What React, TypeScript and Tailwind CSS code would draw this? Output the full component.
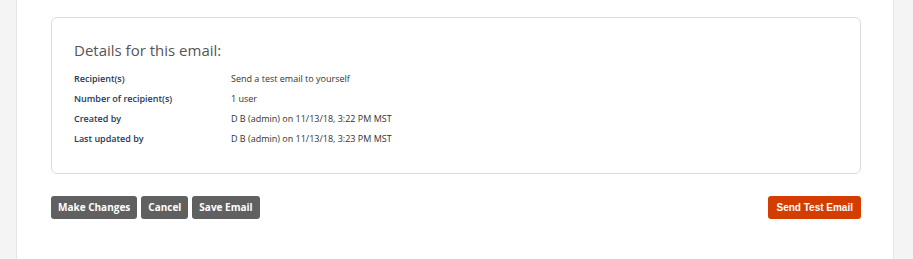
export default function App() {
  const rows = [
    { label: 'Recipient(s)', value: 'Send a test email to yourself' },
    { label: 'Number of recipient(s)', value: '1 user' },
    { label: 'Created by', value: 'D B (admin) on 11/13/18, 3:22 PM MST' },
    { label: 'Last updated by', value: 'D B (admin) on 11/13/18, 3:23 PM MST' },
  ];

  return (
    <div className="flex h-[259px] w-[913px] bg-[#f4f4f4] font-['Open_Sans',sans-serif]">
      <div className="ml-[16px] mr-[19px] flex-1 border-x border-[#e4e4e4] bg-white pl-[34px] pr-[32px] pt-[17px]">
        <div className="h-[157px] rounded-[6px] border border-[#dcdcdc] px-[22px] pt-[22px]">
          <h2 className="text-[15px] leading-[20px] text-[#555555]">Details for this email:</h2>
          <div className="mt-[9px] flex flex-col">
            {rows.map((row) => (
              <div key={row.label} className="flex h-[20px] items-center text-[9px]">
                <div className="w-[157px] font-semibold text-[#1d3a5b]">{row.label}</div>
                <div className="text-[#333333]">{row.value}</div>
              </div>
            ))}
          </div>
        </div>
        <div className="mt-[22px] flex items-center">
          <div className="flex gap-[4px]">
            {['Make Changes', 'Cancel', 'Save Email'].map((label) => (
              <button
                key={label}
                className="h-[23px] rounded-[3px] bg-[#606060] px-[7px] text-[10px] font-bold text-white"
              >
                {label}
              </button>
            ))}
          </div>
          <button className="ml-auto h-[23px] rounded-[3px] bg-[#d33d00] px-[8px] font-['Liberation_Sans',Arial,sans-serif] text-[10px] font-bold text-white">
            Send Test Email
          </button>
        </div>
      </div>
    </div>
  );
}
